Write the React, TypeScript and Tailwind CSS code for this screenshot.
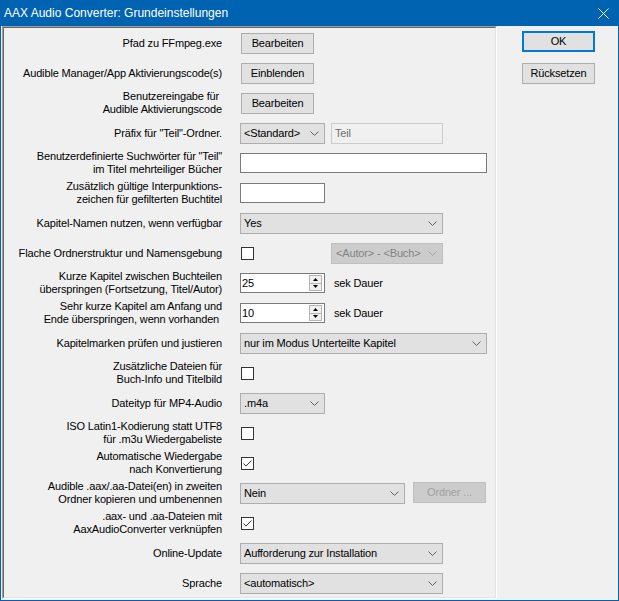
import React from "react";

const Chevron = ({ color = "#606060" }: { color?: string }) => (
  <svg width="9" height="5" viewBox="0 0 9 5" className="shrink-0">
    <polyline points="0.5,0.5 4.5,4.5 8.5,0.5" fill="none" stroke={color} strokeWidth="1" />
  </svg>
);

const Select = ({ text, className }: { text: string; className: string }) => (
  <div className={`flex h-[21px] items-center justify-between border border-[#adadad] bg-[#e1e1e1] pl-[3px] pr-[5px] ${className}`}>
    <span className="whitespace-nowrap">{text}</span>
    <Chevron />
  </div>
);

const Btn = ({ text, className = "" }: { text: string; className?: string }) => (
  <div className={`flex h-[21px] w-[73px] items-center justify-center border border-[#adadad] bg-[#e1e1e1] ${className}`}>
    {text}
  </div>
);

const Check = ({ checked }: { checked?: boolean }) => (
  <div className="ml-[1px] flex h-[13px] w-[13px] items-center justify-center border border-[#333333] bg-white">
    {checked && (
      <svg width="11" height="11" viewBox="0 0 11 11">
        <polyline points="1.5,5.5 4,8 9.5,2.5" fill="none" stroke="#333333" strokeWidth="1" />
      </svg>
    )}
  </div>
);

const Numeric = ({ value }: { value: string }) => (
  <div className="flex h-[20px] w-[85px] items-center border border-[#7a7a7a] bg-white pl-[1px]">
    <span className="flex-1">{value}</span>
    <div className="mr-[2px] flex h-[16px] w-[13px] flex-col border border-[#b4b4b4] bg-[#f0f0f0]">
      <div className="flex flex-1 items-center justify-center border-b border-[#b4b4b4]">
        <svg width="5" height="3" viewBox="0 0 5 3">
          <polygon points="2.5,0 5,3 0,3" fill="#000" />
        </svg>
      </div>
      <div className="flex flex-1 items-center justify-center">
        <svg width="5" height="3" viewBox="0 0 5 3">
          <polygon points="0,0 5,0 2.5,3" fill="#000" />
        </svg>
      </div>
    </div>
  </div>
);

const Row = ({ lines, children }: { lines: string[]; children?: React.ReactNode }) => (
  <div className="flex h-[30px] shrink-0 items-center">
    <div className="w-[218px] text-right leading-[13px]">
      {lines.map((l) => (
        <div key={l} className="whitespace-pre">{l}</div>
      ))}
    </div>
    <div className="ml-[18px] flex items-center">{children}</div>
  </div>
);

export default function App() {
  return (
    <div className="flex h-[601px] w-[619px] flex-col bg-[#0063b1] font-['Liberation_Sans',Arial,sans-serif] text-[11px] tracking-[-0.15px] text-black">
      <div className="flex h-[26px] shrink-0 items-center justify-between pl-[4px] pr-[10px] text-[12px] tracking-normal text-white">
        <span>AAX Audio Converter: Grundeinstellungen</span>
        <svg width="11" height="11" viewBox="0 0 11 11">
          <path d="M0.5 0.5 L10.5 10.5 M10.5 0.5 L0.5 10.5" stroke="#ffffff" strokeWidth="1" />
        </svg>
      </div>
      <div className="mx-[1px] mb-[1px] flex flex-1 bg-[#f0f0f0]">
        <div className="ml-[1px] h-[573px] w-[495px] border border-b-white border-l-[#a0a0a0] border-r-white border-t-[#a0a0a0]">
          <div className="flex h-full w-full flex-col overflow-hidden border border-b-[#e3e3e3] border-l-[#696969] border-r-[#e3e3e3] border-t-[#696969]">
            <Row lines={["Pfad zu FFmpeg.exe"]}>
              <Btn text="Bearbeiten" className="ml-[1px]" />
            </Row>
            <Row lines={["Audible Manager/App Aktivierungscode(s)"]}>
              <Btn text="Einblenden" className="ml-[1px]" />
            </Row>
            <Row lines={["Benutzereingabe für\u00a0", "Audible Aktivierungscode"]}>
              <Btn text="Bearbeiten" className="ml-[1px]" />
            </Row>
            <Row lines={['Präfix für "Teil"-Ordner.']}>
              <Select text="<Standard>" className="w-[85px]" />
              <div className="ml-[6px] flex h-[21px] w-[112px] items-center border border-[#cccccc] bg-[#f0f0f0] pl-[3px] text-[#6d6d6d]">
                Teil
              </div>
            </Row>
            <Row lines={['Benutzerdefinierte Suchwörter für "Teil"', "im Titel mehrteiliger Bücher"]}>
              <div className="h-[20px] w-[247px] border border-[#7a7a7a] bg-white" />
            </Row>
            <Row lines={["Zusätzlich gültige Interpunktions-", "zeichen für gefilterten Buchtitel"]}>
              <div className="h-[20px] w-[85px] border border-[#7a7a7a] bg-white" />
            </Row>
            <Row lines={["Kapitel-Namen nutzen, wenn verfügbar"]}>
              <Select text="Yes" className="w-[203px]" />
            </Row>
            <Row lines={["Flache Ordnerstruktur und Namensgebung"]}>
              <Check />
              <div className="ml-[77px] flex h-[21px] w-[112px] items-center justify-between border border-[#bfbfbf] bg-[#cccccc] pl-[4px] pr-[5px] text-[#838383]">
                <span>&lt;Autor&gt; - &lt;Buch&gt;</span>
                <Chevron color="#a8a8a8" />
              </div>
            </Row>
            <Row lines={["Kurze Kapitel zwischen Buchteilen", "überspringen (Fortsetzung, Titel/Autor)"]}>
              <Numeric value="25" />
              <span className="ml-[9px]">sek Dauer</span>
            </Row>
            <Row lines={["Sehr kurze Kapitel am Anfang und", "Ende überspringen, wenn vorhanden\u00a0"]}>
              <Numeric value="10" />
              <span className="ml-[9px]">sek Dauer</span>
            </Row>
            <Row lines={["Kapitelmarken prüfen und justieren"]}>
              <Select text="nur im Modus Unterteilte Kapitel" className="w-[247px]" />
            </Row>
            <Row lines={["Zusätzliche Dateien für", "Buch-Info und Titelbild"]}>
              <Check />
            </Row>
            <Row lines={["Dateityp für MP4-Audio"]}>
              <Select text=".m4a" className="w-[85px]" />
            </Row>
            <Row lines={["ISO Latin1-Kodierung statt UTF8", "für .m3u Wiedergabeliste"]}>
              <Check />
            </Row>
            <Row lines={["Automatische Wiedergabe", "nach Konvertierung"]}>
              <Check checked />
            </Row>
            <Row lines={["Audible .aax/.aa-Datei(en) in zweiten", "Ordner kopieren und umbenennen"]}>
              <Select text="Nein" className="w-[165px]" />
              <div className="mb-[2px] ml-[8px] flex h-[21px] w-[73px] items-center justify-center border border-[#bfbfbf] bg-[#cccccc] text-[#a0a0a0]">
                Ordner ...
              </div>
            </Row>
            <Row lines={[".aax- und .aa-Dateien mit", "AaxAudioConverter verknüpfen"]}>
              <Check checked />
            </Row>
            <Row lines={["Online-Update"]}>
              <Select text="Aufforderung zur Installation" className="w-[203px]" />
            </Row>
            <Row lines={["Sprache"]}>
              <Select text="<automatisch>" className="w-[203px]" />
            </Row>
          </div>
        </div>
        <div className="flex flex-1 flex-col pl-[25px] pt-[5px]">
          <div className="flex h-[21px] w-[73px] items-center justify-center border-2 border-[#0078d7] bg-[#e1e1e1]">
            OK
          </div>
          <Btn text="Rücksetzen" className="mt-[11px]" />
        </div>
      </div>
    </div>
  );
}
